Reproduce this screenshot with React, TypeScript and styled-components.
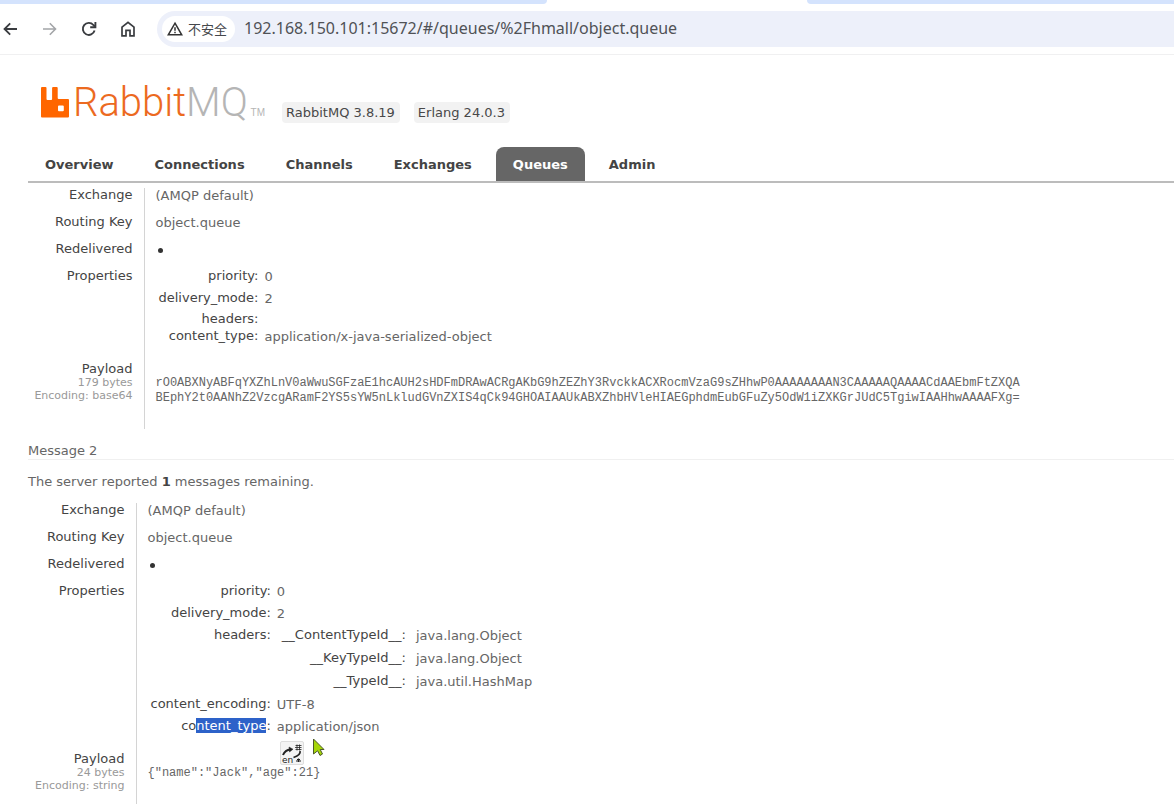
import React from 'react';
import styled, { createGlobalStyle, css } from 'styled-components';

const GlobalStyle = createGlobalStyle`
  * { box-sizing: border-box; }
  body {
    margin: 0;
    background: #fff;
    color: #666;
    font: 13px/16px "DejaVu Sans", Verdana, sans-serif;
    overflow-x: hidden;
  }
`;

/* ---------- browser chrome ---------- */

const TabStrip = styled.div`
  display: flex;
  height: 4px;
  background: #fff;
`;

const TabEdge = styled.div<{ $side: 'left' | 'right' }>`
  flex: ${p => (p.$side === 'left' ? '547 1 0' : '367 1 0')};
  background: #d4e3fd;
  border-radius: ${p => (p.$side === 'left' ? '0 0 4px 0' : '0 0 0 4px')};
`;

const ActiveTab = styled.div`
  flex: 260 1 0;
`;

const Toolbar = styled.div`
  display: flex;
  align-items: center;
  height: 51px;
  padding-bottom: 1px;
  border-bottom: 1px solid #f0f0f1;
`;

const NavButtons = styled.div`
  display: flex;
  flex: none;
  gap: 19px;
  margin-right: 20px;
`;

const IconButton = styled.button<{ $muted?: boolean }>`
  display: block;
  width: 20px;
  height: 20px;
  padding: 0;
  border: 0;
  background: none;
  color: ${p => (p.$muted ? '#a3a5a8' : '#3a3c40')};
  svg { display: block; }
`;

const AddressBar = styled.div`
  display: flex;
  flex: 1;
  align-items: center;
  gap: 9px;
  height: 36px;
  padding-left: 5px;
  border-radius: 18px 0 0 18px;
  background: #edf0fa;
`;

const SecurityChip = styled.button`
  display: flex;
  flex: none;
  align-items: center;
  gap: 5px;
  height: 26px;
  padding: 0 8px 0 5px;
  border: 0;
  border-radius: 13px;
  background: #fff;
  color: #45474b;
  font: 13px/20px "Noto Sans", "Noto Sans CJK SC", sans-serif;
`;

const UrlInput = styled.input`
  flex: 1;
  min-width: 0;
  height: 22px;
  padding: 0 0 2px;
  border: 0;
  outline: 0;
  background: none;
  color: #505256;
  font: 16px/20px "Noto Sans", "Open Sans", sans-serif;
`;

/* ---------- management page ---------- */

const Page = styled.div`
  padding-left: 28px;
`;

const Header = styled.header`
  display: flex;
  align-items: flex-end;
  gap: 14px;
  padding: 31px 0 0 13px;
`;

const Logo = styled.a`
  display: flex;
  align-items: flex-end;
  width: 227px;
  height: 37px;
  padding-bottom: 5px;
  color: #b5b5b5;
  text-decoration: none;
  svg { flex: none; display: block; margin-right: 3px; }
`;

const LogoText = styled.span`
  font: 300 40px/30px "Roboto", sans-serif;
  b { color: #ec6a1f; font-weight: 300; }
`;

const Trademark = styled.span`
  margin-left: auto;
  padding-right: 3px;
  font: 10px/10px "Liberation Sans", Arial, sans-serif;
`;

const Version = styled.span`
  padding: 3px 5px 2px 4px;
  border-radius: 4px;
  background: #f2f2f2;
  color: #484848;
`;

const Tabs = styled.nav`
  display: flex;
  gap: 7px;
  margin-top: 24px;
  border-bottom: 2px solid #bcbcbc;
`;

const Tab = styled.a<{ $active?: boolean }>`
  height: 34px;
  padding: 10px 17px 8px;
  border-radius: 8px 8px 0 0;
  background: ${p => (p.$active ? '#666' : 'transparent')};
  color: ${p => (p.$active ? '#fff' : '#444')};
  font-weight: bold;
  text-decoration: none;
`;

const MessageTitle = styled.h3`
  margin: 14px 0;
  border-bottom: 1px solid #f0f0f0;
  color: #666;
  font-size: 13px;
  font-weight: normal;
`;

const Remaining = styled.p`
  margin: 0 0 13px;
  b { color: #444; }
`;

const Facts = styled.table<{ $labelWidth: number }>`
  border-collapse: collapse;
  margin-top: 5px;

  > tbody > tr > th {
    min-width: ${p => p.$labelWidth}px;
    width: ${p => p.$labelWidth}px;
    padding: 6px 11px 7px 0;
    border-right: 1px solid #d4d4d4;
    color: #444;
    font-weight: normal;
    line-height: 14px;
    text-align: right;
    vertical-align: top;
    white-space: nowrap;
  }
  > tbody > tr > td {
    padding: 6px 11px 5px;
    vertical-align: top;
  }
  > tbody > tr:first-child > th { padding-top: 0; }
  > tbody > tr:first-child > td { padding-top: 0; }
`;

const PropertiesCell = styled.td`
  && { padding: 2px 11px 9px; }
`;

const PayloadCell = styled.td`
  && { padding: 20px 11px 23px; }
`;

const tableReset = css`
  border-collapse: collapse;
  th {
    color: #444;
    font-weight: normal;
    text-align: right;
    vertical-align: top;
    white-space: nowrap;
  }
  td { vertical-align: top; }
`;

const Properties = styled.table`
  ${tableReset}
  > tbody > tr > th { padding: 3px 2px 3px 3px; }
  > tbody > tr > td { padding: 4px 4px 2px; }
`;

const HeaderEntries = styled.table`
  ${tableReset}
  > tbody > tr > th { padding: 3px 2px 4px 9px; }
  > tbody > tr > td { padding: 4px 3px 3px 8px; }
`;

const EmptyRow = styled.tr`
  && > th { padding: 4px 2px 0; line-height: 12px; }
  && > td { padding: 0; }
`;

const NestedCell = styled.td`
  && { padding: 0; }
`;

const Small = styled.small`
  display: block;
  color: #999;
  font-size: 11px;
  line-height: 13px;
`;

const Redelivered = styled.span`
  display: block;
  width: 5px;
  height: 5px;
  margin: 6px 0 4px 2px;
  border-radius: 50%;
  background: #333;
`;

const Payload = styled.pre`
  margin: 0;
  color: #666;
  font: 12px/15px "Liberation Mono", "Courier New", monospace;
`;

const Selected = styled.mark`
  background: #2d62c9;
  color: #fff;
`;

const Anchor = styled.div`
  position: relative;
`;

const TranslateBadge = styled.button`
  position: absolute;
  top: 22px;
  left: 3px;
  width: 24px;
  height: 24px;
  padding: 0;
  border: 1px solid #ddd;
  border-radius: 2px;
  background: #f4f4f4;
  svg { display: block; }
`;

const Pointer = styled.svg`
  position: absolute;
  top: 19px;
  left: 35px;
`;

const BackIcon = () => (
  <svg width="20" height="20" viewBox="0 0 20 20" fill="none" stroke="currentColor" strokeWidth="1.8">
    <path d="M17 10H4.5M10.2 4.3 4.5 10l5.7 5.7" />
  </svg>
);

const ForwardIcon = () => (
  <svg width="20" height="20" viewBox="0 0 20 20" fill="none" stroke="currentColor" strokeWidth="1.6">
    <path d="M4 10h12.500M10.800 4.300l5.700 5.700-5.700 5.700" />
  </svg>
);

const ReloadIcon = () => (
  <svg width="20" height="20" viewBox="0 0 20 20" fill="none" stroke="currentColor" strokeWidth="1.9">
    <path d="M16.600 11.600A6 6 0 1 1 15.400 6L17 7.600" />
    <path d="M17.400 3v5.200h-5.200" />
  </svg>
);

const HomeIcon = () => (
  <svg width="20" height="20" viewBox="0 0 20 20" fill="none" stroke="currentColor" strokeWidth="1.7">
    <path d="M5 16.800V8.200L11 3.400l6 4.800v8.600h-4v-5.400H9v5.400z" />
  </svg>
);

const WarningIcon = () => (
  <svg width="16" height="16" viewBox="0 0 16 16" fill="none" stroke="#333" strokeWidth="1.5">
    <path d="M8 2.2 14.7 13.8H1.3z" />
    <path d="M8 6.2v3.6M8 10.8v1.500" />
  </svg>
);

const RabbitIcon = () => (
  <svg width="29" height="31" viewBox="0 0 29 31" fill="#f60" fillRule="evenodd">
    <path d="M1 0h3.5q1 0 1 1v11q0 1 1 1h3.600q1 0 1-1V1q0-1 1-1h3.600q1 0 1 1v10q0 1 1 1H27q1 0 1 1v16.500q0 1-1 1H1q-1 0-1-1V1Q0 0 1 0zM18 18.400q-1 0-1 1v3.800q0 1 1 1h3.800q1 0 1-1v-3.800q0-1-1-1z" />
  </svg>
);

const TranslateIcon = () => (
  <svg width="22" height="22" viewBox="0 0 22 22" fill="none" stroke="#222">
    <path d="M2 13q2-5 7.500-5.500" strokeWidth="2" />
    <path d="M8 5l4 2.200-3.500 2.800z" fill="#222" strokeWidth="0.500" />
    <path d="M19 9q1 4-6.500 6.500" strokeWidth="1.700" />
    <path d="M14.500 3.500h6M14 5.500h6.500M14.500 7.500h6M16 2.500v6M18.500 2.500v6" strokeWidth="0.800" />
    <path d="M15 19h5M17.500 16.500v3.500M16 17.500h3" strokeWidth="1.200" />
    <text x="1" y="21" fill="#222" stroke="none" fontFamily="DejaVu Sans, sans-serif" fontSize="9">en</text>
  </svg>
);

const tabs = ['Overview', 'Connections', 'Channels', 'Exchanges', 'Queues', 'Admin'];

const headerEntries = [
  ['__ContentTypeId__', 'java.lang.Object'],
  ['__KeyTypeId__', 'java.lang.Object'],
  ['__TypeId__', 'java.util.HashMap'],
];

const serializedPayload = [
  'rO0ABXNyABFqYXZhLnV0aWwuSGFzaE1hcAUH2sHDFmDRAwACRgAKbG9hZEZhY3RvckkACXRocmVzaG9sZHhwP0AAAAAAAAN3CAAAAAQAAAACdAAEbmFtZXQA',
  'BEphY2t0AANhZ2VzcgARamF2YS5sYW5nLkludGVnZXIS4qCk94GHOAIAAUkABXZhbHVleHIAEGphdmEubGFuZy5OdW1iZXKGrJUdC5TgiwIAAHhwAAAAFXg=',
].join('\n');

interface MessageProps {
  labelWidth: number;
  size: string;
  encoding: string;
  payload: string;
  children: React.ReactNode;
}

function Message({ labelWidth, size, encoding, payload, children }: MessageProps) {
  return (
    <Facts $labelWidth={labelWidth}>
      <tbody>
        <tr><th scope="row">Exchange</th><td>(AMQP default)</td></tr>
        <tr><th scope="row">Routing Key</th><td>object.queue</td></tr>
        <tr><th scope="row">Redelivered</th><td><Redelivered role="img" aria-label="yes" /></td></tr>
        <tr>
          <th scope="row">Properties</th>
          <PropertiesCell>
            <Properties><tbody>{children}</tbody></Properties>
          </PropertiesCell>
        </tr>
        <tr>
          <th scope="row">
            Payload
            <Small>{size}</Small>
            <Small>Encoding: {encoding}</Small>
          </th>
          <PayloadCell><Payload>{payload}</Payload></PayloadCell>
        </tr>
      </tbody>
    </Facts>
  );
}

export default function App() {
  return (
    <>
      <GlobalStyle />
      <TabStrip>
        <TabEdge $side="left" />
        <ActiveTab />
        <TabEdge $side="right" />
      </TabStrip>
      <Toolbar>
        <NavButtons>
          <IconButton aria-label="Back"><BackIcon /></IconButton>
          <IconButton aria-label="Forward" $muted><ForwardIcon /></IconButton>
          <IconButton aria-label="Reload"><ReloadIcon /></IconButton>
          <IconButton aria-label="Home"><HomeIcon /></IconButton>
        </NavButtons>
        <AddressBar>
          <SecurityChip><WarningIcon />不安全</SecurityChip>
          <UrlInput aria-label="Address" defaultValue="192.168.150.101:15672/#/queues/%2Fhmall/object.queue" />
        </AddressBar>
      </Toolbar>

      <Page>
        <Header>
          <Logo href="#/">
            <RabbitIcon />
            <LogoText><b>Rabbit</b>MQ</LogoText>
            <Trademark>TM</Trademark>
          </Logo>
          <Version>RabbitMQ 3.8.19</Version>
          <Version>Erlang 24.0.3</Version>
        </Header>
        <Tabs>
          {tabs.map(t => (
            <Tab key={t} href={`#/${t.toLowerCase()}`} $active={t === 'Queues'}>{t}</Tab>
          ))}
        </Tabs>

        <main>
          <Message labelWidth={116} size="179 bytes" encoding="base64" payload={serializedPayload}>
            <tr><th scope="row">priority:</th><td>0</td></tr>
            <tr><th scope="row">delivery_mode:</th><td>2</td></tr>
            <EmptyRow><th scope="row">headers:</th><td /></EmptyRow>
            <tr><th scope="row">content_type:</th><td>application/x-java-serialized-object</td></tr>
          </Message>

          <MessageTitle>Message 2</MessageTitle>
          <Remaining>The server reported <b>1</b> messages remaining.</Remaining>

          <Message labelWidth={108} size="24 bytes" encoding="string" payload={'{"name":"Jack","age":21}'}>
            <tr><th scope="row">priority:</th><td>0</td></tr>
            <tr><th scope="row">delivery_mode:</th><td>2</td></tr>
            <tr>
              <th scope="row">headers:</th>
              <NestedCell>
                <HeaderEntries>
                  <tbody>
                    {headerEntries.map(([name, value]) => (
                      <tr key={name}><th scope="row">{name}:</th><td>{value}</td></tr>
                    ))}
                  </tbody>
                </HeaderEntries>
              </NestedCell>
            </tr>
            <tr><th scope="row">content_encoding:</th><td>UTF-8</td></tr>
            <tr>
              <th scope="row">co<Selected>ntent_type</Selected>:</th>
              <td>
                <Anchor>
                  application/json
                  <TranslateBadge aria-label="Translate"><TranslateIcon /></TranslateBadge>
                  <Pointer width="14" height="19" viewBox="0 0 14 19">
                    <path d="M1.500 1 12 11.500H8.200L10.500 16 8 17.500 5.600 12.800 1.500 16z" fill="#a6d608" stroke="#4d5a2a" />
                  </Pointer>
                </Anchor>
              </td>
            </tr>
          </Message>
        </main>
      </Page>
    </>
  );
}
